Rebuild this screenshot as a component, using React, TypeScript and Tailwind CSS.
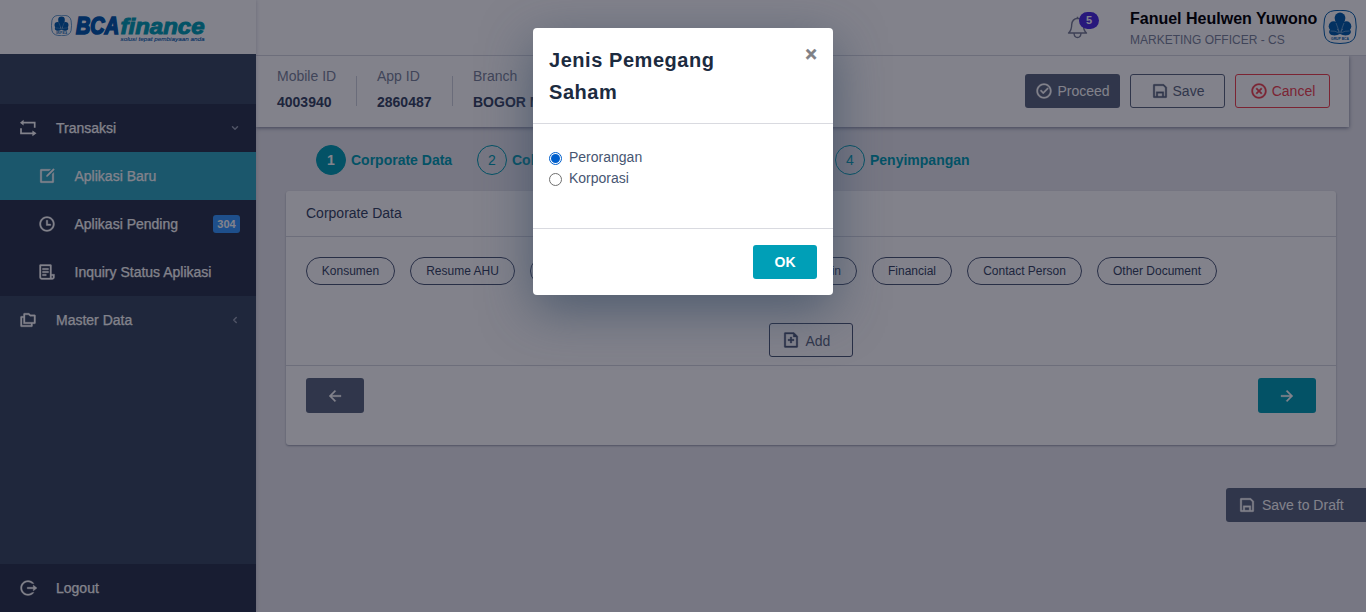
import React from "react";
import {
  RiArrowLeftLine, RiArrowRightLine, RiCheckboxCircleLine, RiCloseCircleLine, RiEditBoxLine,
  RiFileAddLine, RiFileList3Line, RiFoldersLine, RiLogoutCircleRLine, RiSaveLine, RiTimeLine,
} from "react-icons/ri";
import { ChevronDown, ChevronLeft } from "lucide-react";

const bold = "[stroke:currentColor] [stroke-width:0.45px]";

function Emblem({ className }: { className: string }) {
  return (
    <svg viewBox="0 0 34 34" className={className}>
      <path d="M11 .7Q17 0 23 .7Q31 1.5 32.5 9Q34 17 32.5 25Q31 32 23 33Q17 34 11 33Q3 32 1.5 25Q0 17 1.5 9Q3 1.5 11 .7Z" fill="#fff" stroke="#005dab" strokeWidth="1" />
      <g fill="#005dab">
        <circle cx="17" cy="8" r="5.400" />
        <path d="M12.200 10L16.300 24H17.700L21.800 10Z" />
        <circle cx="10.600" cy="16.200" r="4.900" />
        <circle cx="23.400" cy="16.200" r="4.900" />
        <path d="M11 13L16.800 24Q13 26.200 8.500 25Q5.600 23.700 6.200 21L8 18Z" />
        <path d="M23 13L17.200 24Q21 26.200 25.500 25Q28.400 23.700 27.800 21L26 18Z" />
      </g>
      <g stroke="#fff" strokeWidth=".5" fill="none" opacity=".75">
        <path d="M16.700 22.800L13 13M17.300 22.800L21 13M16 22.900Q12 20.600 7.500 21M18 22.900Q22 20.600 26.500 21" />
      </g>
      <text x="8" y="30.200" fontSize="4.200" fontWeight="700" textLength="18" lengthAdjust="spacingAndGlyphs" fill="#005dab" fontFamily="Liberation Sans">GRUP BCA</text>
    </svg>
  );
}

function Brand() {
  return (
    <div className="flex h-[54px] shrink-0 items-start bg-white pl-[51px] pt-[10px]">
      <Emblem className="mt-[5px] h-[21px] w-[21px] shrink-0" />
      <svg viewBox="0 -4 140 40" className="ml-[2px] h-10 w-[140px]" fontFamily="Liberation Sans, sans-serif" fontStyle="italic">
        <text x="2" y="20" fontSize="23.500" fontWeight="700" textLength="43" lengthAdjust="spacingAndGlyphs" fill="#0059ad" stroke="#0059ad" strokeWidth="1.700">BCA</text>
        <text x="46.500" y="20" fontSize="22" fontWeight="700" textLength="84" lengthAdjust="spacingAndGlyphs" fill="#009fb4" stroke="#009fb4" strokeWidth="1">finance</text>
        <text x="46.500" y="27" fontSize="5.800" textLength="84" lengthAdjust="spacingAndGlyphs" fill="#0059ad" stroke="#0059ad" strokeWidth=".1">solusi tepat pembiayaan anda</text>
      </svg>
    </div>
  );
}

function TransferIcon() {
  return (
    <svg width="18" height="18" viewBox="0 0 18 18" fill="none" stroke="currentColor" strokeWidth="1.700">
      <path d="M3 3.700H15.700V8.800M2 9.200V14.300H14.500" />
      <path d="M4.600 .8V6.600L1 3.700ZM13.400 11.400V17.200L17.500 14.300Z" fill="currentColor" stroke="none" />
    </svg>
  );
}

function NavItem({ icon, label, sub, className = "", right }: { icon: React.ReactNode; label: string; sub?: boolean; className?: string; right?: React.ReactNode }) {
  return (
    <div className={`flex h-12 shrink-0 items-center pr-4 text-sm text-white ${sub ? "pl-[38px]" : "pl-[19px]"} ${className}`}>
      <span className="flex w-[18px] shrink-0 justify-center">{icon}</span>
      <span className={`[-webkit-text-stroke:0.25px_white] ${sub ? "ml-[18.500px]" : "ml-[19px]"}`}>{label}</span>
      <span className="ml-auto">{right}</span>
    </div>
  );
}

function Field({ label, value }: { label: string; value: string }) {
  return (
    <div className="whitespace-nowrap text-sm">
      <div className="h-[26px] leading-5 text-[#7b849a]">{label}</div>
      <div className="font-bold leading-5 text-[#364563]">{value}</div>
    </div>
  );
}

function Step({ n, label, active, className }: { n: number; label: string; active?: boolean; className: string }) {
  return (
    <div className={`flex shrink-0 items-center gap-[5px] text-sm text-[#009fb4] ${className}`}>
      <span className={`flex h-[30px] w-[30px] shrink-0 items-center justify-center rounded-full border border-[#009fb4] ${active ? "bg-[#009fb4] font-bold text-white" : ""}`}>{n}</span>
      <span className="whitespace-nowrap font-bold">{label}</span>
    </div>
  );
}

const pills: [string, string][] = [
  ["Konsumen", "w-[89px] justify-center"], ["Resume AHU", "w-[105px] justify-center"], ["", "w-[147px]"],
  ["Lain", "w-[165px] justify-end pr-[15px]"], ["Financial", "w-[80px] justify-center"],
  ["Contact Person", "w-[115px] justify-center"], ["Other Document", "w-[120px] justify-center"],
];

export default function App() {
  return (
    <div className="relative flex h-[612px] w-[1366px] overflow-hidden bg-[#e9e9ee] font-['Liberation_Sans',Arial,sans-serif]">
      <aside className="z-10 flex w-64 shrink-0 flex-col bg-[#394960] shadow-[0_0_4px_rgba(50,60,100,0.25)]">
        <Brand />
        <div className="h-[50px] shrink-0" />
        <div className="bg-[#2b354c]">
          <NavItem icon={<TransferIcon />} label="Transaksi" right={<ChevronDown size={10} strokeWidth={3.500} className="text-[#9aa2b4]" />} />
          <NavItem sub className="bg-[#31a8c0]" icon={<RiEditBoxLine size={18} className={bold} />} label="Aplikasi Baru" />
          <NavItem sub icon={<RiTimeLine size={18} className={bold} />} label="Aplikasi Pending" right={<span className="flex h-[18px] w-[27px] items-center justify-center rounded-[3px] bg-[#3699ff] pt-px text-[11px] font-bold">304</span>} />
          <NavItem sub icon={<RiFileList3Line size={18} className={bold} />} label="Inquiry Status Aplikasi" />
        </div>
        <NavItem icon={<RiFoldersLine size={18} className={bold} />} label="Master Data" right={<ChevronLeft size={10} strokeWidth={3.500} className="text-[#9aa2b4]" />} />
        <NavItem className="mt-auto bg-[#2b354c]" icon={<RiLogoutCircleRLine size={18} className={bold} />} label="Logout" />
      </aside>

      <main className="flex min-w-0 flex-1 flex-col">
        <header className="flex h-14 shrink-0 items-start border-b border-[#d5d6df] bg-white pl-[811px]">
          <div className="relative mt-4 h-6 w-[22px]">
            <svg width="22" height="24" viewBox="0 0 22 24" fill="none" stroke="#777c94" strokeWidth="1.400" strokeLinejoin="round">
              <path d="M1.500 17Q4.700 14.500 4.700 8.500Q5.300 3 10.500 2.300Q15.700 3 16.300 8.500Q16.300 14.500 19.500 17ZM10.500 2.300V.8M7 17.500Q7.500 21.500 10.500 21.500Q13.500 21.500 14 17.500" />
            </svg>
            <span className="absolute -top-1 left-3 flex h-[17px] w-5 items-center justify-center rounded-full bg-[#4a2ae0] text-[11px] font-bold text-white">5</span>
          </div>
          <div className="ml-[41px] mt-[9px] w-[193px] whitespace-nowrap">
            <div className="text-base font-bold leading-5 text-black">Fanuel Heulwen Yuwono</div>
            <div className="mt-px text-xs leading-5 text-[#7b849a]">MARKETING OFFICER - CS</div>
          </div>
          <Emblem className="mt-2.5 h-[34px] w-[34px]" />
        </header>

        <section className="flex h-[71px] w-[1093px] shrink-0 items-start bg-white pl-[21px] pt-2.5 shadow-[0_1px_4px_rgba(35,45,80,0.55)] [clip-path:inset(0_-8px_-8px_0)]">
          <div className="w-[79px]"><Field label="Mobile ID" value="4003940" /></div>
          <div className="mt-2.5 h-[30px] w-[21px] border-l border-[#cfd2dc]" />
          <div className="w-[75px]"><Field label="App ID" value="2860487" /></div>
          <div className="mt-2.5 h-[30px] w-[21px] border-l border-[#cfd2dc]" />
          <Field label="Branch" value="BOGOR M" />
          <div className="ml-auto mr-[19px] mt-2 flex gap-2.5 text-sm">
            <button className="flex h-[34px] w-[95px] items-center justify-center gap-1 rounded-[3px] bg-[#5b677f] text-white"><RiCheckboxCircleLine size={18} className={bold} />Proceed</button>
            <button className="flex h-[34px] w-[95px] items-center justify-center gap-1 rounded-[3px] border border-[#5b677f] text-[#5b677f]"><RiSaveLine size={18} className={bold} />Save</button>
            <button className="flex h-[34px] w-[95px] items-center justify-center gap-1 rounded-[3px] border border-[#f0424f] text-[#f0424f]"><RiCloseCircleLine size={18} className={bold} />Cancel</button>
          </div>
        </section>

        <nav className="ml-[60px] mt-[18px] flex h-[30px] shrink-0">
          <Step n={1} label="Corporate Data" active className="w-[161px]" />
          <Step n={2} label="Coll" className="w-[358px]" />
          <Step n={4} label="Penyimpangan" className="w-[160px]" />
        </nav>

        <section className="ml-[30px] mt-4 flex h-[254px] w-[1050px] shrink-0 flex-col rounded-[3px] bg-white shadow-[0_1px_2px_rgba(35,45,80,0.4)]">
          <div className="h-[46px] border-b border-[#d5d6df] pl-5 pt-3 text-sm leading-5 text-[#364563]">Corporate Data</div>
          <div className="flex h-[129px] flex-col border-b border-[#d5d6df] px-5 pt-5">
            <div className="flex gap-[15px]">
              {pills.map(([label, w], i) => (
                <span key={i} className={`flex h-7 shrink-0 items-center whitespace-nowrap rounded-full border border-[#4b5875] text-xs text-[#364563] ${w}`}>{label}</span>
              ))}
            </div>
            <button className="ml-[463px] mt-[38px] flex h-[34px] w-[84px] shrink-0 items-center rounded-[3px] border border-[#4b5875] pl-3 text-sm text-[#5b677f]">
              <RiFileAddLine size={18} className={`mr-[5.500px] text-[#4b5875] ${bold}`} /><span className="pt-0.5">Add</span>
            </button>
          </div>
          <div className="flex justify-between px-5 pt-3">
            <button className="flex h-[35px] w-[58px] items-center justify-center rounded-[3px] bg-[#5b677f] text-white"><RiArrowLeftLine size={18} className={bold} /></button>
            <button className="flex h-[35px] w-[58px] items-center justify-center rounded-[3px] bg-[#009fb4] text-white"><RiArrowRightLine size={18} className={bold} /></button>
          </div>
        </section>

        <button className="ml-auto mt-[43px] flex h-[34px] w-[140px] shrink-0 items-center rounded-l-[3px] bg-[#5b677f] pl-3 text-sm text-white"><RiSaveLine size={18} className={`mr-1.5 ${bold}`} />Save to Draft</button>
      </main>

      <div className="absolute inset-0 z-20 flex items-start justify-center bg-[#050517]/50 pt-7">
        <div role="dialog" className="flex h-[267px] w-[300px] flex-col rounded-[4px] bg-white shadow-[0_15px_50px_rgba(50,70,95,0.65)]">
          <div className="flex h-24 justify-between border-b border-[#d9dae0] px-4 pt-4">
            <h2 className="w-[200px] text-xl font-bold leading-8 tracking-[0.55px] text-[#1c2b3f]">Jenis Pemegang Saham</h2>
            <button className="h-5 self-start text-[20px] font-bold leading-5 text-[#7f8085] [-webkit-text-stroke:0.5px_#7f8085]">×</button>
          </div>
          <div className="flex h-[105px] flex-col border-b border-[#d9dae0] pl-4 pt-[23px] text-sm leading-[21px] text-[#475672]">
            <label className="flex h-[21px]"><span className="mr-[7px] mt-[5px] flex h-[13px] w-[13px] items-center justify-center rounded-full border border-[#005fcc]"><span className="h-[9px] w-[9px] rounded-full bg-[#005fcc]" /></span>Perorangan</label>
            <label className="flex h-[21px]"><span className="mr-[7px] mt-[5px] h-[13px] w-[13px] rounded-full border border-[#6f6f6f]" />Korporasi</label>
          </div>
          <button className="mr-4 mt-4 h-[34px] w-16 self-end rounded-[3px] bg-[#009fb7] text-sm font-bold text-white">OK</button>
        </div>
      </div>
    </div>
  );
}
